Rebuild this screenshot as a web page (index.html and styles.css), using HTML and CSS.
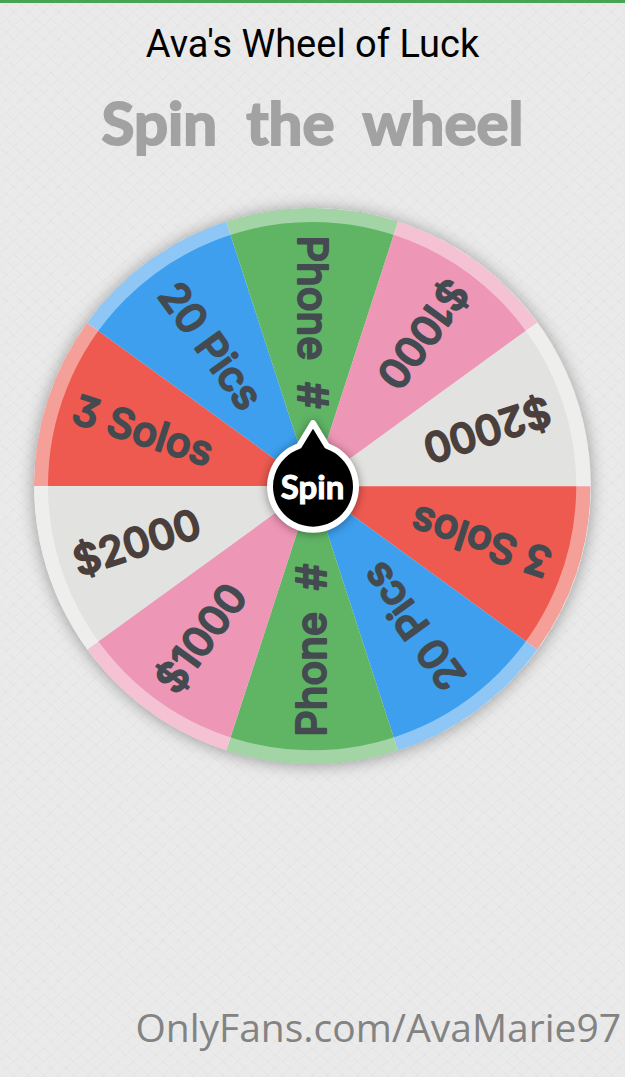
FILE: index.html
```html
<!DOCTYPE html>
<html lang="en">
<head>
    <meta charset="UTF-8" />
    <meta name="viewport" content="width=device-width, initial-scale=1" />
    <title>Ava's Wheel of Luck</title>
    <link rel="stylesheet" href="styles.css">
</head>
<body>
<main class="page">
    <h1 class="title">Ava's Wheel of Luck</h1>
    <p class="prompt">Spin&nbsp; the&nbsp; wheel</p>

    <div class="wheel">
        <svg class="wheel-disc" viewBox="-278 -278 556 556">
            <defs>
                <path id="slice" d="M0 0L-264.4 85.9A278 278 0 0 1 -264.4 -85.9Z" />
            </defs>
            <!-- each slice is drawn on the left side, then rotated into place -->
            <g class="red" transform="rotate(18)"><use href="#slice" /><text x="-178" y="14">3 Solos</text></g>
            <g class="blue" transform="rotate(54)"><use href="#slice" /><text x="-173" y="14">20 Pics</text></g>
            <g class="green" transform="rotate(90)"><use href="#slice" /><text x="-164" y="14">Phone&nbsp; #</text></g>
            <g class="pink" transform="rotate(126)"><use href="#slice" /><text x="-188" y="14">$1000</text></g>
            <g class="white" transform="rotate(162)"><use href="#slice" /><text x="-184" y="14">$2000</text></g>
            <g class="red" transform="rotate(198)"><use href="#slice" /><text x="-178" y="14">3 Solos</text></g>
            <g class="blue" transform="rotate(234)"><use href="#slice" /><text x="-173" y="14">20 Pics</text></g>
            <g class="green" transform="rotate(270)"><use href="#slice" /><text x="-164" y="14">Phone&nbsp; #</text></g>
            <g class="pink" transform="rotate(306)"><use href="#slice" /><text x="-188" y="14">$1000</text></g>
            <g class="white" transform="rotate(342)"><use href="#slice" /><text x="-184" y="14">$2000</text></g>
            <circle class="rim" r="271" />
        </svg>
        <button type="button" class="spin">
            <svg class="spin-pin" viewBox="-46 -68 92 136" aria-hidden="true">
                <path d="M0 -63L14 -40A43 43 0 1 1 -14 -40Z" />
            </svg>
            <span class="spin-text">Spin</span>
        </button>
    </div>

    <footer class="credit">OnlyFans.com/AvaMarie97</footer>
</main>
</body>
</html>
```

FILE: styles.css
```css
* {
    box-sizing: border-box;
}
body {
    margin: 0;
    background: #fff;
    font-family: "Open Sans", "Noto Sans", sans-serif;
}
.page {
    display: flex;
    flex-direction: column;
    align-items: center;
    min-height: calc(100vh - 3px);
    padding-top: 17px;
    border-top: 3px solid #48a453;
    /* light crosshatch paper */
    background-color: #eaeaea;
    background-image:
        repeating-linear-gradient(42deg, rgba(0,0,0,0.02) 0 1px, transparent 1px 10px),
        repeating-linear-gradient(-42deg, rgba(0,0,0,0.02) 0 1px, transparent 1px 10px);
}
.title {
    margin: 0;
    font-family: Roboto, sans-serif;
    font-size: 38px;
    font-weight: 400;
    line-height: 48px;
    color: #000;
}
.prompt {
    margin: 14px 0 0;
    font-family: Lato, sans-serif;
    font-size: 60px;
    font-weight: 700;
    line-height: 80px;
    color: #a2a2a2;
    -webkit-text-stroke: 2px #a2a2a2;
}

/* Wheel */
.wheel {
    position: relative;
    width: 89%;
    margin-top: 46px;
}
.wheel-disc {
    display: block;
    width: 100%;
    border-radius: 50%;
    box-shadow: 0 1px 16px rgba(0,0,0,0.35);
}
.wheel-disc text {
    font-family: Inter, sans-serif;
    font-size: 41px;
    font-weight: 500;
    font-feature-settings: "cv09";
    text-anchor: middle;
    fill: #444b50;
    stroke: #444b50;
    stroke-width: 2px;
    stroke-linejoin: round;
}
.red {
    fill: #ee5a50;
}
.blue {
    fill: #3d9fee;
}
.green {
    fill: #60b565;
}
.pink {
    fill: #ee96b6;
}
.white {
    fill: #e2e2e1;
}
.wheel-disc .white text {
    fill: #4a3f3b;
    stroke: #4a3f3b;
}
.rim {
    fill: none;
    stroke: rgba(255,255,255,0.42);
    stroke-width: 14px;
}

/* Spin button in the middle of the wheel */
.spin {
    position: absolute;
    inset: 0;
    display: grid;
    place-items: center;
    width: 92px;
    height: 136px;
    margin: auto;
    padding: 0;
    border: none;
    background: none;
    cursor: pointer;
}
.spin-pin,
.spin-text {
    grid-area: 1 / 1;
}
.spin-pin {
    width: 92px;
    height: 136px;
    overflow: visible;
    fill: #000;
    stroke: #fff;
    stroke-width: 6px;
    stroke-linejoin: round;
    filter: drop-shadow(0 1px 5px rgba(0,0,0,0.4));
}
.spin-text {
    position: relative;
    font-family: Lato, sans-serif;
    font-size: 33px;
    font-weight: 700;
    line-height: 40px;
    color: #fff;
    -webkit-text-stroke: 1px #fff;
}

.credit {
    align-self: flex-end;
    margin-top: auto;
    padding: 0 4px 22px;
    font-size: 39px;
    line-height: 56px;
    color: #838383;
}
```
